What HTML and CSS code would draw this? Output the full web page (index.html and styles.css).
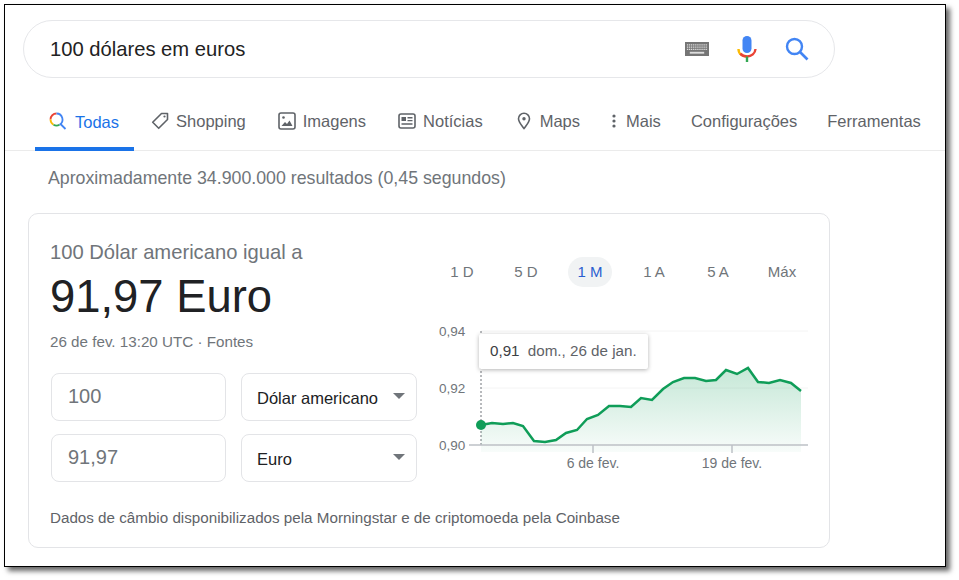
FILE: index.html
```html
<!DOCTYPE html>
<html lang="pt-BR">
<head>
    <meta charset="UTF-8">
    <meta name="viewport" content="width=device-width, initial-scale=1.0">
    <title>100 dólares em euros</title>
    <link rel="stylesheet" href="styles.css">
</head>
<body>
    <div class="frame">
        <div class="search-bar">
            <span class="search-text">100 dólares em euros</span>
            <svg class="kbd-icon" width="24" height="14" viewBox="0 0 25 15" preserveAspectRatio="none">
                <rect width="25" height="15" fill="#757575"/>
                <path d="M2 3h21M2 5.500h21M2 8h21" stroke="#ddd" stroke-width="1.300" stroke-dasharray="1.300 .7"/>
                <rect x="5" y="10.500" width="15" height="2" fill="#ddd"/>
            </svg>
            <svg class="mic-icon" width="20" height="28" viewBox="0 0 20 28">
                <rect x="5.500" y="1" width="9" height="17" rx="4.500" fill="#4285f4"/>
                <path d="M1.500 14c0 5 4 7.500 8.500 7.500" fill="none" stroke="#fbbc05" stroke-width="2.400"/>
                <path d="M1.500 14c.3 4.500 4 7.500 8.500 7.500s8.200-3 8.500-7.500" fill="none" stroke="#ea4335" stroke-width="2.400" stroke-dasharray="0 5 40"/>
                <rect x="8.800" y="21.500" width="2.400" height="5.500" fill="#34a853"/>
            </svg>
            <svg class="search-icon" width="24" height="24" viewBox="0 0 24 24">
                <circle cx="9.500" cy="9.500" r="7.500" fill="none" stroke="#4285f4" stroke-width="2.400"/>
                <path d="M15 15l7.500 7.500" stroke="#4285f4" stroke-width="2.600"/>
            </svg>
        </div>

        <div class="tabs">
            <a class="tab active">
                <svg width="18" height="18" viewBox="0 0 18 18" fill="none" stroke-width="1.800">
                    <path d="M7.500 1.500a6 6 0 0 0-6 6" stroke="#ea4335"/>
                    <path d="M1.500 7.500a6 6 0 0 0 3 5.200" stroke="#fbbc05"/>
                    <path d="M4.500 12.700a6 6 0 0 0 6 0" stroke="#34a853"/>
                    <path d="M7.500 1.500a6 6 0 0 1 3 11.200" stroke="#4285f4"/>
                    <path d="M11.500 12l5 5" stroke="#4285f4"/>
                </svg>
                Todas
            </a>
            <a class="tab">
                <svg width="18" height="18" viewBox="0 0 18 18" fill="none" stroke="#5f6368" stroke-width="1.600">
                    <path d="M10.500 1.500h6v6l-8.800 8.800-6-6z" stroke-linejoin="round"/>
                    <circle cx="13.500" cy="4.500" r="1.100" fill="#5f6368" stroke="none"/>
                </svg>
                Shopping
            </a>
            <a class="tab">
                <svg width="18" height="18" viewBox="0 0 18 18" fill="none" stroke="#5f6368" stroke-width="1.600">
                    <rect x="1" y="1" width="16" height="16" rx="2"/>
                    <circle cx="5.500" cy="5.500" r="1.300" fill="#5f6368" stroke="none"/>
                    <path d="M3.500 14l3.500-4 2 2 2.500-3.500 3 5.500z" fill="#5f6368" stroke="none"/>
                </svg>
                Imagens
            </a>
            <a class="tab">
                <svg width="18" height="18" viewBox="0 0 18 18" fill="none" stroke="#5f6368" stroke-width="1.600">
                    <rect x="1" y="2" width="16" height="14" rx="2"/>
                    <rect x="3.500" y="5" width="4.500" height="4" fill="#5f6368" stroke="none"/>
                    <path d="M9.500 5.800h5M9.500 8.600h5M3.500 12h11" stroke-width="1.400"/>
                </svg>
                Notícias
            </a>
            <a class="tab maps">
                <svg width="14" height="18" viewBox="0 0 14 18" fill="none" stroke="#5f6368" stroke-width="1.600">
                    <path d="M7 16.500C4 12.500 1.500 10 1.500 6.800a5.500 5.500 0 0 1 11 0C12.500 10 10 12.500 7 16.500z"/>
                    <circle cx="7" cy="6.800" r="1.700" fill="#5f6368" stroke="none"/>
                </svg>
                Maps
            </a>
            <a class="tab more">
                <svg width="4" height="14" viewBox="0 0 4 14" fill="#5f6368">
                    <circle cx="2" cy="2" r="1.600"/>
                    <circle cx="2" cy="7" r="1.600"/>
                    <circle cx="2" cy="12" r="1.600"/>
                </svg>
                Mais
            </a>
            <a class="tab plain">Configurações</a>
            <a class="tab plain">Ferramentas</a>
        </div>

        <div class="result-stats">Aproximadamente 34.900.000 resultados (0,45 segundos)</div>

        <div class="card">
            <div class="converter">
                <div class="from-label">100 Dólar americano igual a</div>
                <div class="to-value">91,97 Euro</div>
                <div class="updated">26 de fev. 13:20 UTC · Fontes</div>
                <div class="form-row">
                    <div class="amount">100</div>
                    <div class="currency">Dólar americano<span class="caret"></span></div>
                </div>
                <div class="form-row">
                    <div class="amount">91,97</div>
                    <div class="currency">Euro<span class="caret"></span></div>
                </div>
            </div>

            <div class="chart-area">
                <div class="ranges">
                    <span>1 D</span>
                    <span>5 D</span>
                    <span class="current">1 M</span>
                    <span>1 A</span>
                    <span>5 A</span>
                    <span>Máx</span>
                </div>
                <div class="chart">
                    <svg width="400" height="150" viewBox="430 325 400 150">
                        <defs>
                            <linearGradient id="fade" x1="0" y1="0" x2="0" y2="1">
                                <stop offset="0" stop-color="#0f9d58" stop-opacity=".24"/>
                                <stop offset="1" stop-color="#0f9d58" stop-opacity=".03"/>
                            </linearGradient>
                        </defs>
                        <path d="M481 331H808M481 388H808" stroke="#f4f4f4"/>
                        <path d="M481 331V445" stroke="#70757a" stroke-dasharray="2 2"/>
                        <polygon fill="url(#fade)" points="481,452 481,425 492,423 503,424 513,423 523,426 534,441 545,442 556,440 566,433 577,430 587,419 598,415 609,406 620,406 631,407 641,398 652,400 663,389 673,382 684,378 695,378 706,381 716,380 726,370 737,374 748,368 758,382 769,383 780,380 791,383 801,391 801,452"/>
                        <polyline fill="none" stroke="#0f9d58" stroke-width="2.500" points="481,425 492,423 503,424 513,423 523,426 534,441 545,442 556,440 566,433 577,430 587,419 598,415 609,406 620,406 631,407 641,398 652,400 663,389 673,382 684,378 695,378 706,381 716,380 726,370 737,374 748,368 758,382 769,383 780,380 791,383 801,391"/>
                        <circle cx="481" cy="425" r="5" fill="#0f9d58"/>
                        <path d="M469 445H808M593 445V453M732 445V453" stroke="#bdc1c6" stroke-width="1.500"/>
                        <g class="axis">
                            <text x="439" y="336">0,94</text>
                            <text x="439" y="393">0,92</text>
                            <text x="439" y="450">0,90</text>
                            <text class="date" x="593" y="468" text-anchor="middle">6 de fev.</text>
                            <text class="date" x="732" y="468" text-anchor="middle">19 de fev.</text>
                        </g>
                    </svg>
                    <div class="tooltip"><b>0,91</b> dom., 26 de jan.</div>
                </div>
            </div>

            <div class="attribution">Dados de câmbio disponibilizados pela Morningstar e de criptomoeda pela Coinbase</div>
        </div>
    </div>
</body>
</html>
```

FILE: styles.css
```css
html, body { margin: 0; height: 100%; background-color: #fff; overflow: hidden; }
body { font-family: "Liberation Sans", Arial, sans-serif; color: #202124; }

.frame { box-sizing: border-box; width: 942px; height: 563px; margin: 4px 0 0 4px; border: 1px solid #000; box-shadow: 4px 4px 5px rgba(0, 0, 0, .6); }

.search-bar { box-sizing: border-box; display: flex; align-items: center; width: 812px; height: 58px; margin: 15px 0 0 18px; padding: 0 25px 0 26px; border: 1px solid #e6e7ea; border-radius: 29px; }
.search-text { flex: 1; font-size: 20.200px; color: #222; }
.kbd-icon { margin-right: 28px; }
.mic-icon { margin-right: 28px; }

.tabs { display: flex; align-items: center; height: 72px; padding-left: 30px; border-bottom: 1px solid #ebebeb; }
.tab { box-sizing: border-box; display: flex; align-items: center; gap: 7px; height: 72px; padding: 15px 16px 0; font-size: 16.500px; color: #5f6368; }
.tab svg { flex: none; margin-top: -2px; }
.tab.active { gap: 8px; margin-right: 1px; padding: 19px 15px 0 14px; color: #1a73e8; border-bottom: 4px solid #1a73e8; margin-bottom: -1px; }
.tab.maps { gap: 9px; padding-left: 18px; }
.tab.more { gap: 10px; }
.tab.plain { padding: 15px 16px 0 14px; }

.result-stats { margin: 17px 0 0 43px; font-size: 17.750px; line-height: 20px; color: #70757a; }

.card { box-sizing: border-box; display: grid; grid-template-columns: 367px 1fr; width: 802px; height: 335px; margin: 25px 0 0 23px; padding: 26px 0 0 21px; border: 1px solid #e3e4e7; border-radius: 10px; }

.from-label { font-size: 20.200px; line-height: 24px; color: #70757a; }
.to-value { margin-top: 7px; font-size: 45.400px; line-height: 52px; color: #202124; }
.updated { margin-top: 10px; font-size: 15.200px; line-height: 18px; color: #70757a; }

.form-row { display: flex; gap: 15px; margin: 13px 0 0 1px; }
.updated + .form-row { margin-top: 22px; }
.amount, .currency { box-sizing: border-box; display: flex; align-items: center; height: 48px; border: 1px solid #e3e4e7; border-radius: 8px; }
.amount { width: 175px; padding: 0 16px 2px; font-size: 20px; color: #70757a; }
.currency { position: relative; width: 176px; padding: 2px 15px 0; font-size: 16.500px; color: #202124; }
.caret { position: absolute; right: 11px; top: 19px; border: 6px solid transparent; border-top-color: #70757a; border-bottom: 0; }

.chart-area { grid-column: 2; grid-row: 1; margin-left: 13px; }
.ranges { display: flex; margin-top: 17px; }
.ranges span { box-sizing: border-box; width: 64px; height: 30px; line-height: 30px; text-align: center; font-size: 15px; color: #70757a; }
.ranges .current { width: 44px; margin: 0 10px; background-color: #f1f3f4; border-radius: 15px; color: #2a5fd0; }

.chart { position: relative; width: 400px; height: 150px; margin: 38px 0 0 0; }
.axis { font-size: 13.500px; fill: #70757a; }
.axis .date { font-size: 14px; }
.tooltip { position: absolute; left: 49px; top: 9px; height: 35px; padding: 0 11px; line-height: 34px; font-size: 15.200px; white-space: nowrap; color: #5f6368; background-color: #fff; border-radius: 2px; box-shadow: 0 1px 4px rgba(0, 0, 0, .3); }
.tooltip b { font-weight: normal; margin-right: 4px; color: #3c4043; }

.attribution { grid-column: 1 / 3; margin-top: 7px; font-size: 15.200px; line-height: 18px; color: #5f6368; }
```
